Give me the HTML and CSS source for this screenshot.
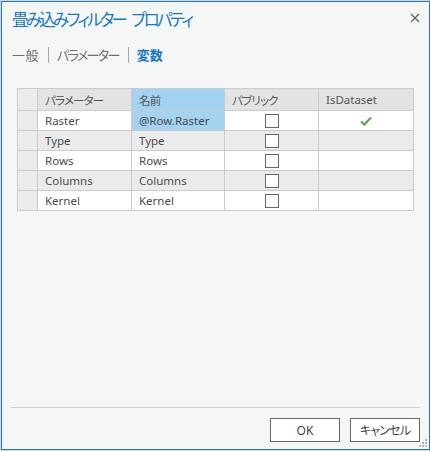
FILE: index.html
```html
<!DOCTYPE html>
<html lang="ja">
<head>
<meta charset="utf-8">
<link rel="stylesheet" href="styles.css">
</head>
<body>
<div class="dialog">
  <div class="titlebar">
    <div class="title">畳み込みフィルター プロパティ</div>
    <div class="close">
      <svg width="10" height="10" viewBox="0 0 10 10"><path d="M1 1L9 9M9 1L1 9" stroke="#666" stroke-width="1.3" fill="none"/></svg>
    </div>
  </div>
  <div class="tabs">
    <span class="tab">一般</span>
    <span class="sep"></span>
    <span class="tab kana">パラメーター</span>
    <span class="sep"></span>
    <span class="tab active">変数</span>
  </div>
  <div class="content">
    <table class="grid">
      <colgroup>
        <col class="c0"><col class="c1"><col class="c2"><col class="c3"><col class="c4">
      </colgroup>
      <thead>
        <tr>
          <th class="rh"></th>
          <th class="jp">パラメーター</th>
          <th class="jp sel">名前</th>
          <th class="jp">パブリック</th>
          <th>IsDataset</th>
        </tr>
      </thead>
      <tbody>
        <tr>
          <td class="rh"></td><td>Raster</td><td class="sel">@Row.Raster</td>
          <td class="cb"><span class="box"></span></td>
          <td class="cb"><svg width="12" height="10" viewBox="0 0 12 10"><path d="M1 5.5L4.3 8.5L11 1.5" stroke="#5aa65a" stroke-width="2.2" fill="none"/></svg></td>
        </tr>
        <tr class="alt">
          <td class="rh"></td><td>Type</td><td>Type</td>
          <td class="cb"><span class="box"></span></td><td></td>
        </tr>
        <tr>
          <td class="rh"></td><td>Rows</td><td>Rows</td>
          <td class="cb"><span class="box"></span></td><td></td>
        </tr>
        <tr class="alt">
          <td class="rh"></td><td>Columns</td><td>Columns</td>
          <td class="cb"><span class="box"></span></td><td></td>
        </tr>
        <tr>
          <td class="rh"></td><td>Kernel</td><td>Kernel</td>
          <td class="cb"><span class="box"></span></td><td></td>
        </tr>
      </tbody>
    </table>
  </div>
  <div class="footer">
    <div class="rule"></div>
    <div class="buttons">
      <button class="btn">OK</button>
      <button class="btn jpbtn">キャンセル</button>
    </div>
  </div>
  <div class="grip">
    <svg width="10" height="10" viewBox="0 0 10 10" fill="#b8b8b8">
      <rect x="7" y="1" width="2" height="2"/>
      <rect x="4" y="4" width="2" height="2"/><rect x="7" y="4" width="2" height="2"/>
      <rect x="1" y="7" width="2" height="2"/><rect x="4" y="7" width="2" height="2"/><rect x="7" y="7" width="2" height="2"/>
    </svg>
  </div>
</div>
</body>
</html>
```

FILE: styles.css
```css
html, body {
  margin: 0;
  padding: 0;
}
body {
  background: #d6d6d6;
  width: 430px;
  height: 451px;
  overflow: hidden;
  font-family: "Noto Sans CJK JP", "Noto Sans", sans-serif;
  font-feature-settings: "palt";
}
.dialog {
  position: relative;
  box-sizing: border-box;
  margin: 1px 0 0 1px;
  width: 429px;
  height: 449px;
  border: 1px solid #1f7ac4;
  background: #f5f7f7;
  display: flex;
  flex-direction: column;
}
.titlebar {
  display: flex;
  justify-content: space-between;
  align-items: flex-start;
  padding: 5px 10px 0 10px;
}
.title {
  color: #1a78c2;
  font-size: 16.5px;
  line-height: 24px;
  letter-spacing: -2.7px;
  word-spacing: 5px;
}
.close {
  width: 10px;
  height: 10px;
  margin-top: 6px;
  margin-right: -1px;
}
.close svg { display: block; }
.tabs {
  display: flex;
  align-items: center;
  padding: 15px 0 0 10px;
  font-size: 13px;
  line-height: 18px;
  color: #6e6e6e;
}
.tab {
  letter-spacing: 0.5px;
}
.tab.kana {
  letter-spacing: -1.6px;
}
.tab.active {
  color: #1a78c2;
  font-weight: bold;
  letter-spacing: 0;
}
.sep {
  width: 1px;
  height: 16px;
  background: #a8a8a8;
  margin: 0 8px 0 9px;
}
.content {
  flex: 1;
  padding: 24px 0 0 15px;
}
.grid {
  border-collapse: collapse;
  table-layout: fixed;
  width: 397px;
  font-family: "Noto Sans", "Noto Sans CJK JP", sans-serif;
  font-size: 11.5px;
  color: #4a4a4a;
  background: #fff;
}
.grid .c0 { width: 20px; }
.grid .c1 { width: 94px; }
.grid .c2 { width: 93px; }
.grid .c3 { width: 94px; }
.grid .c4 { width: 95px; }
.grid th, .grid td {
  border: 1px solid #cbcbcb;
  padding: 0 0 0 7px;
  text-align: left;
  font-weight: normal;
  white-space: nowrap;
  overflow: hidden;
}
.grid th {
  height: 21px;
  background: #e3e3e3;
  color: #555;
}
.grid th.jp {
  font-family: "Noto Sans CJK JP", "Noto Sans", sans-serif;
  letter-spacing: -0.8px;
}
.grid td {
  height: 19px;
}
.grid tr.alt td {
  background: #ebebeb;
}
.grid .rh, .grid tr.alt .rh {
  background: #ebebeb;
  padding: 0;
}
.grid th.sel, .grid td.sel {
  background: #a3d3f1;
}
.grid td.cb {
  text-align: center;
  padding: 0;
  line-height: 0;
}
.box {
  display: inline-block;
  box-sizing: border-box;
  width: 14px;
  height: 14px;
  border: 1px solid #666;
  background: #fff;
  vertical-align: middle;
}
.footer {
  padding: 0 9px 7px 9px;
}
.rule {
  height: 1px;
  background: #cdcdcd;
}
.buttons {
  display: flex;
  justify-content: flex-end;
  gap: 10px;
  padding-top: 10px;
}
.btn {
  box-sizing: border-box;
  width: 70px;
  height: 24px;
  margin: 0;
  padding: 0;
  border: 1px solid #666;
  background: #fff;
  color: #444;
  font-family: "Noto Sans", "Noto Sans CJK JP", sans-serif;
  font-feature-settings: "palt";
  font-size: 12px;
}
.btn.jpbtn {
  letter-spacing: -0.8px;
}
.grip {
  position: absolute;
  right: 1px;
  bottom: 1px;
  width: 10px;
  height: 10px;
}
.grip svg { display: block; }
```
